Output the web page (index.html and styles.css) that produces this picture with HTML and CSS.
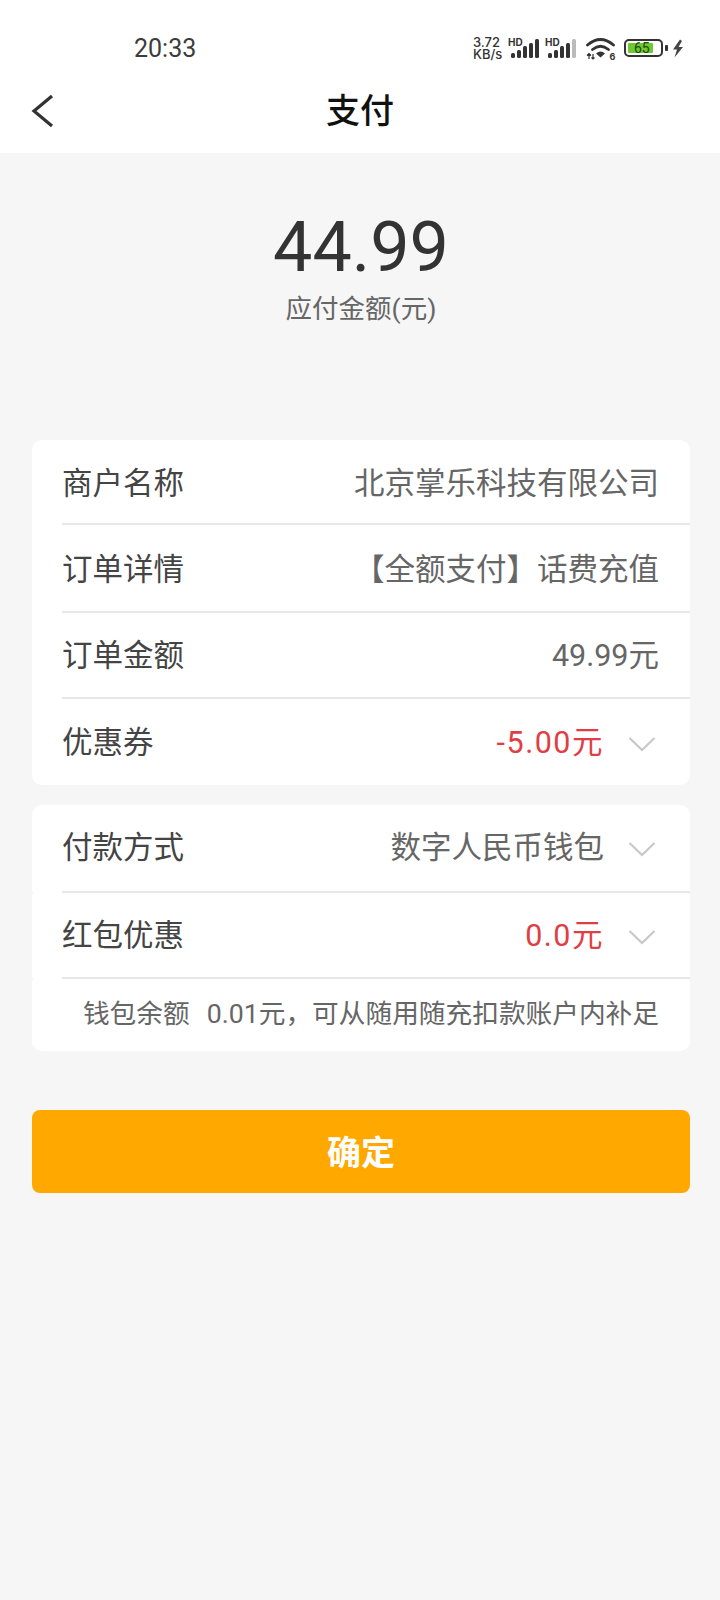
FILE: index.html
```html
<!DOCTYPE html>
<html lang="zh-CN">
<head>
    <meta charset="UTF-8">
    <title>支付</title>
    <link rel="stylesheet" href="styles.css">
</head>
<body>
    <header class="top">
        <div class="status">
            <span class="time">20:33</span>
            <div class="status-icons">
                <span class="speed">3.72<br>KB/s</span>
                <span class="sim">
                    <span class="hd">HD</span>
                    <svg class="bars" width="28" height="19" viewBox="0 0 28 19"><g fill="#333"><rect x="0" y="14" width="4" height="5" rx="1.500"/><rect x="6" y="11" width="4" height="8" rx="1.500"/><rect x="12" y="7" width="4" height="12" rx="1.500"/><rect x="18" y="4" width="4" height="15" rx="1.500"/><rect x="24" y="0" width="4" height="19" rx="1.500"/></g></svg>
                </span>
                <span class="sim sim-2">
                    <span class="hd">HD</span>
                    <svg class="bars" width="28" height="19" viewBox="0 0 28 19"><g fill="#333"><rect x="0" y="14" width="4" height="5" rx="1.500"/><rect x="6" y="11" width="4" height="8" rx="1.500"/><rect x="12" y="7" width="4" height="12" rx="1.500"/><rect x="18" y="4" width="4" height="15" rx="1.500"/></g><rect x="24" y="0" width="4" height="19" rx="1.500" fill="#bbb"/></svg>
                </span>
                <svg class="wifi" width="30" height="23" viewBox="0 0 30 23">
                    <g fill="none" stroke="#333" stroke-width="2.800" stroke-linecap="round">
                        <path d="M1.500 8Q14.500 -3 27.500 8"/>
                        <path d="M6.500 12.500Q14.500 6 22.500 12.500"/>
                    </g>
                    <path d="M10 16.500Q14.500 12.500 19 16.500L14.500 20.500Z" fill="#333"/>
                    <path d="M3 22v-5M1 18.500l2-2 2 2M7 17v5M5.500 20.500l1.500 1.500 1.500-1.500" stroke="#333" stroke-width="1.200" fill="none"/>
                    <text x="23.500" y="22.500" class="wifi-num">6</text>
                </svg>
                <span class="battery"><span class="battery-fill"></span><span class="battery-num">65</span></span>
                <span class="battery-cap"></span>
                <svg class="bolt" width="12" height="19" viewBox="0 0 12 19"><path d="M8 0.500L1 10.500h4L2.500 18.500 11 8H6.500L10 2Z" fill="#444"/></svg>
            </div>
        </div>
        <div class="nav">
            <svg class="back" width="24" height="34" viewBox="0 0 24 34"><path d="M21 2L3 17l18 15" fill="none" stroke="#333" stroke-width="3.200"/></svg>
            <h1>支付</h1>
        </div>
    </header>

    <main class="content">
        <div class="amount">
            <div class="amount-num">44.99</div>
            <div class="amount-label">应付金额(元)</div>
        </div>

        <section class="block order">
            <div class="row row-1"><span>商户名称</span><span class="val">北京掌乐科技有限公司</span></div>
            <div class="row row-2"><span>订单详情</span><span class="val">【全额支付】话费充值</span></div>
            <div class="row row-3"><span>订单金额</span><span class="val">49.99元</span></div>
            <div class="row row-4">
                <span>优惠券</span>
                <span class="val red">-5.00元</span>
                <svg class="arrow" width="28" height="16" viewBox="0 0 28 16"><path d="M1.500 2L14 14 26.500 2" fill="none" stroke="#c8c8c8" stroke-width="2.200"/></svg>
            </div>
        </section>

        <section class="block block-top">
            <div class="row row-5">
                <span>付款方式</span>
                <span class="val">数字人民币钱包</span>
                <svg class="arrow" width="28" height="16" viewBox="0 0 28 16"><path d="M1.500 2L14 14 26.500 2" fill="none" stroke="#c8c8c8" stroke-width="2.200"/></svg>
            </div>
        </section>
        <section class="block block-mid">
            <div class="row row-6">
                <span>红包优惠</span>
                <span class="val red">0.0元</span>
                <svg class="arrow" width="28" height="16" viewBox="0 0 28 16"><path d="M1.500 2L14 14 26.500 2" fill="none" stroke="#c8c8c8" stroke-width="2.200"/></svg>
            </div>
        </section>
        <section class="block block-end">
            <div class="note"><span class="note-left">钱包余额</span>0.01元，可从随用随充扣款账户内补足</div>
        </section>

        <button class="ok" type="button">确定</button>
    </main>
</body>
</html>
```

FILE: styles.css
```css
* {
    box-sizing: border-box;
}

html, body {
    margin: 0;
    height: 100%;
}

body {
    font-family: "Roboto", "Noto Sans CJK SC", sans-serif;
    background-color: #f6f6f6;
    color: #333;
}

.top {
    background-color: #fff;
    height: 153px;
}

.status {
    height: 76px;
    padding: 29px 36px 0 134px;
    display: flex;
    justify-content: space-between;
    align-items: flex-start;
}

.time {
    font-size: 25px;
    line-height: 40px;
    color: #3c3c3c;
}

.status-icons {
    display: flex;
    align-items: center;
    height: 38px;
}

.speed {
    font-family: "Inter", sans-serif;
    font-size: 13px;
    line-height: 12px;
    font-weight: 500;
    color: #333;
    width: 38px;
}

.sim {
    position: relative;
    display: flex;
}

.sim-2 {
    margin-left: 9px;
}

.hd {
    position: absolute;
    left: -3px;
    top: -3px;
    font-family: "Inter", sans-serif;
    font-size: 10px;
    line-height: 12px;
    font-weight: 700;
}

.wifi {
    margin-left: 10px;
}

.wifi-num {
    font-family: "Inter", sans-serif;
    font-size: 9px;
    font-weight: 700;
    fill: #333;
}

.battery {
    position: relative;
    width: 39px;
    height: 18px;
    margin-left: 8px;
    border: 2px solid #333;
    border-radius: 5px;
    padding: 2px;
}

.battery-fill {
    display: block;
    width: 25px;
    height: 100%;
    background-color: #6fc92e;
    border-radius: 1px;
}

.battery-num {
    position: absolute;
    left: 8px;
    top: 0;
    font-family: "Roboto", sans-serif;
    font-size: 14px;
    line-height: 14px;
    color: #1d4a10;
}

.battery-cap {
    width: 3px;
    height: 6px;
    margin-left: 2px;
    background-color: #333;
    border-radius: 1px;
}

.bolt {
    margin-left: 4px;
}

.nav {
    position: relative;
    height: 77px;
    display: flex;
    justify-content: center;
    padding-top: 12px;
}

.nav h1 {
    margin: 0;
    font-size: 34px;
    line-height: 46px;
    font-weight: 500;
    color: #111;
}

.back {
    position: absolute;
    left: 31px;
    top: 18px;
}

.content {
    padding: 0 30px 0 32px;
}

.amount {
    height: 287px;
    padding-top: 51px;
    text-align: center;
}

.amount-num {
    font-size: 70px;
    line-height: 86px;
    color: #333;
}

.amount-label {
    font-size: 26.500px;
    line-height: 38px;
    color: #666;
}

.block {
    background-color: #fff;
    border-radius: 10px;
    font-size: 30.500px;
}

.block-top {
    border-radius: 10px 10px 3px 3px;
}

.block-mid {
    border-radius: 3px;
}

.block-end {
    border-radius: 3px 3px 10px 10px;
}

.order {
    margin-bottom: 20px;
}

.row {
    display: flex;
    align-items: center;
    margin-left: 30px;
    padding-right: 31px;
    padding-bottom: 5px;
    color: #444;
    border-bottom: 2px solid #e8e8e8;
}

.row-1 { height: 85px; padding-bottom: 2px; }
.row-2 { height: 88px; padding-bottom: 2px; }
.row-3 { height: 86px; }
.row-4 { height: 86px; border-bottom: 0; }
.row-5 { height: 88px; padding-bottom: 6px; }
.row-6 { height: 86px; padding-bottom: 5px; }

.val {
    margin-left: auto;
    color: #666;
}

.val.red {
    color: #e03e45;
    letter-spacing: 1.500px;
}

.arrow {
    margin-left: 24px;
    margin-top: 8px;
    margin-right: 3px;
}

.note {
    height: 72px;
    padding: 0 31px 8px 0;
    display: flex;
    align-items: center;
    justify-content: flex-end;
    font-size: 26.700px;
    color: #666;
}

.note-left {
    margin-right: 17px;
}

.ok {
    display: block;
    width: 100%;
    height: 83px;
    margin-top: 59px;
    padding-bottom: 4px;
    background-color: #ffa800;
    color: #fff;
    font-family: inherit;
    font-size: 34px;
    font-weight: 700;
    border: none;
    border-radius: 8px;
    cursor: pointer;
}
```
